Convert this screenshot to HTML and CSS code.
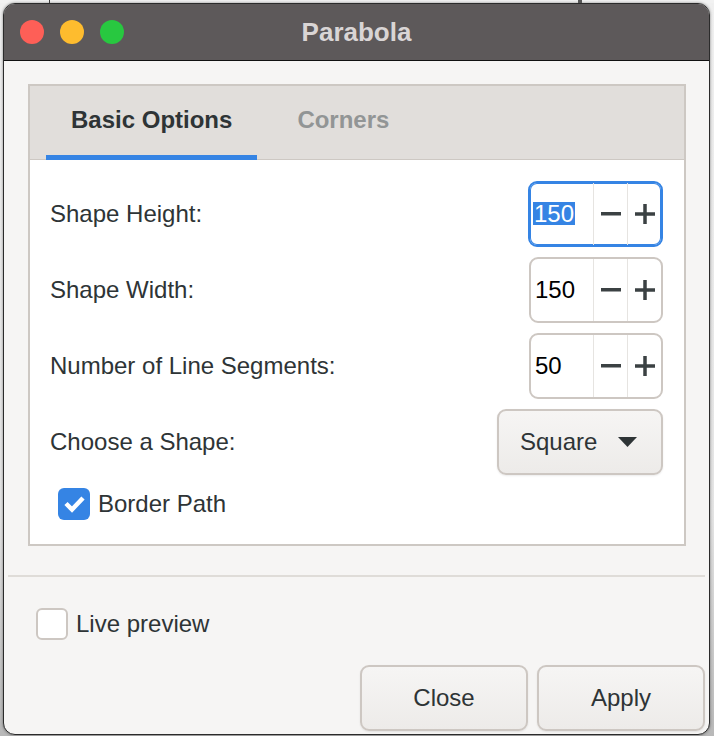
FILE: index.html
```html
<!DOCTYPE html>
<html>
<head>
<meta charset="utf-8">
<link rel="stylesheet" href="styles.css">
</head>
<body>
<div class="topstrip"><span class="mark mark-a"></span><span class="mark mark-b"></span></div>
<div class="window">
  <div class="titlebar">
    <div class="lights">
      <span class="light red"></span><span class="light yellow"></span><span class="light green"></span>
    </div>
    <div class="title">Parabola</div>
    <div></div>
  </div>
  <div class="content">
    <div class="notebook">
      <div class="tabs">
        <div class="tab active">Basic Options</div>
        <div class="tab">Corners</div>
      </div>
      <div class="page">
        <div class="row">
          <span class="label">Shape Height:</span>
          <div class="spin focused">
            <div class="entry"><span class="sel">150</span></div>
            <div class="sbtn"><svg width="20" height="20" viewBox="0 0 20 20"><rect x="0" y="8" width="20" height="3.5" fill="#3b4143"/></svg></div>
            <div class="sbtn"><svg width="20" height="20" viewBox="0 0 20 20"><rect x="0" y="8.25" width="20" height="3.5" fill="#3b4143"/><rect x="8.25" y="0" width="3.5" height="20" fill="#3b4143"/></svg></div>
          </div>
        </div>
        <div class="row">
          <span class="label">Shape Width:</span>
          <div class="spin">
            <div class="entry">150</div>
            <div class="sbtn"><svg width="20" height="20" viewBox="0 0 20 20"><rect x="0" y="8" width="20" height="3.5" fill="#3b4143"/></svg></div>
            <div class="sbtn"><svg width="20" height="20" viewBox="0 0 20 20"><rect x="0" y="8.25" width="20" height="3.5" fill="#3b4143"/><rect x="8.25" y="0" width="3.5" height="20" fill="#3b4143"/></svg></div>
          </div>
        </div>
        <div class="row">
          <span class="label">Number of Line Segments:</span>
          <div class="spin">
            <div class="entry">50</div>
            <div class="sbtn"><svg width="20" height="20" viewBox="0 0 20 20"><rect x="0" y="8" width="20" height="3.5" fill="#3b4143"/></svg></div>
            <div class="sbtn"><svg width="20" height="20" viewBox="0 0 20 20"><rect x="0" y="8.25" width="20" height="3.5" fill="#3b4143"/><rect x="8.25" y="0" width="3.5" height="20" fill="#3b4143"/></svg></div>
          </div>
        </div>
        <div class="row">
          <span class="label">Choose a Shape:</span>
          <div class="button dropdown">
            <span>Square</span>
            <svg width="19" height="10" viewBox="0 0 19 10"><polygon points="0,0 19,0 9.5,10" fill="#2e3436"/></svg>
          </div>
        </div>
        <div class="checkrow">
          <span class="check checked"><svg width="32" height="32" viewBox="0 0 32 32"><path d="M8 15.5 L14 21.5 L25 10" fill="none" stroke="#fff" stroke-width="4.5"/></svg></span>
          <span class="label">Border Path</span>
        </div>
      </div>
    </div>
  </div>
  <div class="separator"></div>
  <div class="footer">
    <div class="checkrow live">
      <span class="check"></span>
      <span class="label">Live preview</span>
    </div>
    <div class="actions">
      <div class="button action">Close</div>
      <div class="button action">Apply</div>
    </div>
  </div>
</div>
</body>
</html>
```

FILE: styles.css
```css
html, body {
  margin: 0;
  padding: 0;
}
body {
  width: 714px;
  height: 736px;
  overflow: hidden;
  background: linear-gradient(180deg, #f0f0f0 0%, #e4e4e4 70%, #b8b8b8 100%);
  font-family: "Liberation Sans", Arial, sans-serif;
  font-size: 24px;
  color: #2e3436;
}
.topstrip {
  height: 3px;
  display: flex;
  background: #f2f2f2;
}
.mark {
  display: block;
  height: 3px;
  background: #3a3a3a;
}
.mark-a {
  width: 1px;
  margin-left: 49px;
}
.mark-b {
  width: 4px;
  margin-left: 528px;
  background: #555;
}
.window {
  margin-left: 3px;
  width: 705px;
  height: 730px;
  border: 1px solid #2b2b2b;
  border-radius: 12px;
  background: #f6f5f4;
  box-shadow: 0 0 3px rgba(0, 0, 0, 0.45);
  overflow: hidden;
}
.titlebar {
  height: 56px;
  background: #5d595a;
  border-bottom: 1px solid #111;
  display: grid;
  grid-template-columns: 1fr auto 1fr;
  align-items: center;
}
.lights {
  display: flex;
  gap: 16px;
  padding-left: 16px;
}
.light {
  width: 24px;
  height: 24px;
  border-radius: 50%;
  display: block;
}
.red { background: #fe5f57; }
.yellow { background: #febc2e; }
.green { background: #28c840; }
.title {
  font-weight: bold;
  font-size: 26px;
  color: #d9d5d5;
  padding-top: 1px;
}
.content {
  padding: 23px 23px 0 24px;
}
.notebook {
  border: 2px solid #cdc8c3;
  background: #fff;
}
.tabs {
  height: 73px;
  background: #e1dedb;
  border-bottom: 1px solid #cdc8c3;
  display: flex;
  padding-left: 16px;
  gap: 15px;
}
.tab {
  padding: 0 25px;
  font-weight: bold;
  color: #929595;
  display: flex;
  align-items: center;
  white-space: nowrap;
  border-bottom: 5px solid transparent;
  margin-bottom: -1px;
  padding-bottom: 1px;
}
.tab.active {
  color: #2e3436;
  border-bottom-color: #3584e4;
}
.page {
  padding: 21px 21px 24px 20px;
  display: flex;
  flex-direction: column;
  gap: 10px;
}
.row {
  height: 66px;
  display: flex;
  align-items: center;
  justify-content: space-between;
}
.label {
  padding-bottom: 1px;
}
.spin {
  box-sizing: border-box;
  width: 134px;
  height: 66px;
  border: 2px solid #cdc7c2;
  border-radius: 9px;
  display: flex;
  background: #fff;
  overflow: hidden;
}
.spin.focused {
  border-color: #3584e4;
  box-shadow: inset 0 0 0 1px #3584e4;
  margin-left: -1px;
  width: 135px;
}
.entry {
  flex: 1;
  display: flex;
  align-items: center;
  padding-left: 4px;
  padding-bottom: 1px;
  color: #000;
}
.focused .entry {
  padding-left: 3px;
}
.sel {
  background: #3584e4;
  color: #fff;
  padding: 0 1px;
  line-height: 23px;
}
.sbtn {
  width: 33px;
  border-left: 1px solid #e6e4e1;
  display: flex;
  align-items: center;
  justify-content: center;
}
.button {
  box-sizing: border-box;
  height: 66px;
  border: 2px solid #cdc7c2;
  border-radius: 9px;
  background: linear-gradient(180deg, #f6f5f4 0%, #edebe9 100%);
  box-shadow: 0 1px 2px rgba(0, 0, 0, 0.08);
  display: flex;
  align-items: center;
  color: #2e3436;
  padding-bottom: 1px;
}
.dropdown {
  width: 166px;
  padding: 0 24px 1px 21px;
  justify-content: space-between;
}
.checkrow {
  display: flex;
  align-items: center;
  gap: 8px;
  margin-top: 3px;
  padding-left: 8px;
  height: 32px;
}
.check {
  box-sizing: border-box;
  width: 32px;
  height: 32px;
  border-radius: 6px;
  border: 2px solid #cdc7c2;
  background: #fff;
  display: block;
}
.check.checked {
  border: none;
  background: #3584e4;
}
.check svg {
  display: block;
}
.separator {
  height: 2px;
  background: #dfdcd8;
  margin: 29px 4px 0;
}
.footer {
  padding: 31px 4px 0 32px;
}
.live {
  margin-top: 0;
  padding-left: 0;
}
.actions {
  display: flex;
  justify-content: flex-end;
  gap: 9px;
  margin-top: 25px;
}
.action {
  width: 168px;
  justify-content: center;
}
```
